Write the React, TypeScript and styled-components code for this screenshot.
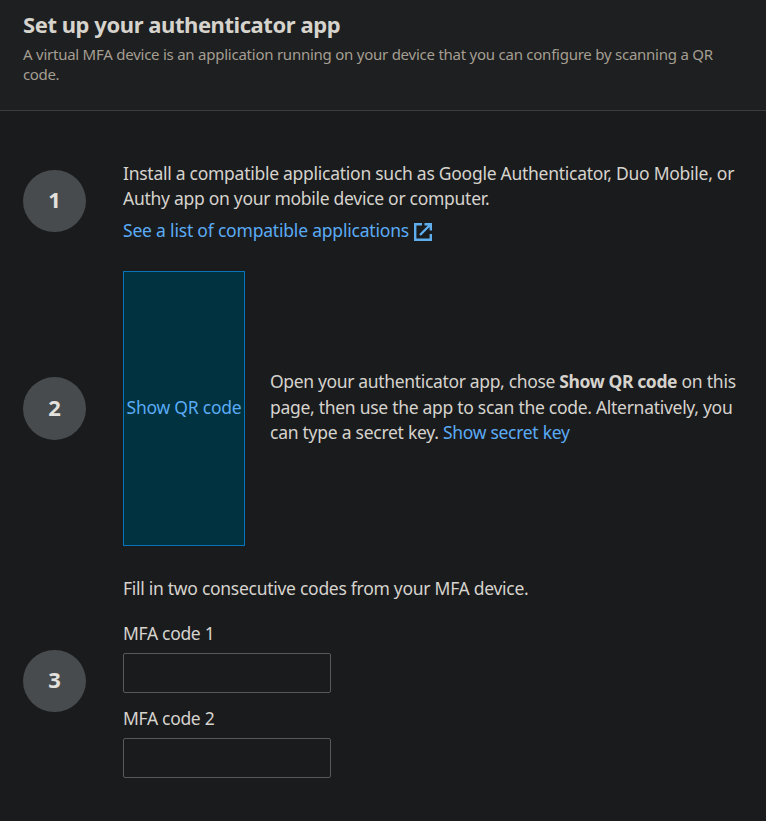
import React from "react";
import styled, { createGlobalStyle } from "styled-components";

const GlobalStyle = createGlobalStyle`
  *, *::before, *::after { box-sizing: border-box; }
  body {
    margin: 0;
    background: #1a1b1d;
    color: #d6d3cd;
    font-family: "Noto Sans", "Open Sans", sans-serif;
    font-size: 17.5px;
    line-height: 25.5px;
  }
`;

const Panel = styled.main`
  display: flex;
  flex-direction: column;
  width: 766px;
  height: 821px;
  overflow: hidden;
`;

const Header = styled.header`
  height: 111px;
  padding: 10px 23px 0;
  background: #1d1f20;
  border-bottom: 1px solid #3a3d3f;
`;

const Title = styled.h1`
  margin: 0 0 5px;
  font-size: 22px;
  line-height: 29px;
  font-weight: 700;
  white-space: nowrap;
`;

const Subtitle = styled.p`
  margin: 0;
  font-size: 15px;
  line-height: 20px;
  color: #a59e92;
`;

const Steps = styled.ol`
  list-style: none;
  margin: 0;
  padding: 50px 23px 0;
  display: flex;
  flex-direction: column;
`;

const Step = styled.li<{ $height: number; $gap?: number }>`
  display: grid;
  grid-template-columns: 63px 1fr;
  column-gap: 37px;
  align-items: center;
  height: ${(p) => p.$height}px;
  margin-bottom: ${(p) => p.$gap ?? 0}px;
`;

const Badge = styled.span<{ $height: number; $lift?: number }>`
  display: flex;
  align-items: center;
  justify-content: center;
  width: 63px;
  height: ${(p) => p.$height}px;
  margin-bottom: ${(p) => p.$lift ?? 0}px;
  border-radius: 50%;
  background: #474b4e;
  color: #e3e1dd;
  font-size: 22px;
  font-weight: 700;
  padding-bottom: 2px;
`;

const Line = styled.span`
  display: block;
  white-space: nowrap;
`;

const Run = styled.span<{ $track: number }>`
  letter-spacing: ${(p) => p.$track}px;
  white-space: pre;
`;

const Bold = styled(Run)`
  font-weight: 700;
`;

const Link = styled(Run)`
  color: #5aabf5;
  cursor: pointer;
`;

const Paragraph = styled.p`
  margin: 0;
  line-height: 25px;
`;

const ExternalRow = styled.div`
  display: flex;
  align-items: center;
  gap: 5px;
  margin-top: 7px;

  svg {
    margin-top: 2px;
  }
`;

const Scan = styled.div`
  display: flex;
  align-items: center;
  gap: 25px;
  height: 100%;
`;

const QrButton = styled.button`
  flex: none;
  width: 122px;
  height: 100%;
  padding: 0 0 2px;
  border: 1px solid #0972b8;
  background: #00323f;
  font: inherit;
  cursor: pointer;
`;

const Instructions = styled.div`
  padding-bottom: 2px;
`;

const CodeForm = styled.div`
  align-self: start;
`;

const Field = styled.label<{ $top: number }>`
  display: block;
  margin-top: ${(p) => p.$top}px;
`;

const CodeInput = styled.input`
  display: block;
  width: 208px;
  height: 40px;
  margin-top: 7px;
  padding: 0 10px;
  border: 1px solid #57595b;
  border-radius: 2px;
  background: #1a1b1d;
  color: inherit;
  font: inherit;
`;

const ExternalIcon = () => (
  <svg width="18" height="18" viewBox="0 0 18 18" fill="none" stroke="#5eaeee" strokeWidth="2.4">
    <path d="M8 1.2H1.2v15.6h15.6V11" />
    <path d="M10.5 1.2h6.3v6.3M16.5 1.5L6 12" />
  </svg>
);

export default function App() {
  return (
    <>
      <GlobalStyle />
      <Panel>
        <Header>
          <Title>
            <Run $track={-0.44}>Set up your authenticator app</Run>
          </Title>
          <Subtitle>
            <Line>
              <Run $track={-0.242}>
                A virtual MFA device is an application running on your device that you can configure by scanning a QR
              </Run>
            </Line>
            <Line>
              <Run $track={-0.35}>code.</Run>
            </Line>
          </Subtitle>
        </Header>
        <Steps>
          <Step $height={82} $gap={28}>
            <Badge $height={62} $lift={3}>1</Badge>
            <div>
              <Paragraph>
                <Line>
                  <Run $track={-0.267}>Install a compatible application such as Google Authenticator, Duo Mobile, or</Run>
                </Line>
                <Line>
                  <Run $track={-0.285}>Authy app on your mobile device or computer.</Run>
                </Line>
              </Paragraph>
              <ExternalRow>
                <Link $track={-0.2}>See a list of compatible applications</Link>
                <ExternalIcon />
              </ExternalRow>
            </div>
          </Step>
          <Step $height={275} $gap={30}>
            <Badge $height={63}>2</Badge>
            <Scan>
              <QrButton>
                <Link $track={-0.24}>Show QR code</Link>
              </QrButton>
              <Instructions>
                <Line>
                  <Run $track={-0.34}>{"Open your authenticator app, chose "}</Run>
                  <Bold $track={-0.38}>Show QR code</Bold>
                  <Run $track={-0.24}>{" on this"}</Run>
                </Line>
                <Line>
                  <Run $track={-0.287}>page, then use the app to scan the code. Alternatively, you</Run>
                </Line>
                <Line>
                  <Run $track={-0.26}>{"can type a secret key. "}</Run>
                  <Link $track={-0.3}>Show secret key</Link>
                </Line>
              </Instructions>
            </Scan>
          </Step>
          <Step $height={210}>
            <Badge $height={62}>3</Badge>
            <CodeForm>
              <Line>
                <Run $track={-0.28}>Fill in two consecutive codes from your MFA device.</Run>
              </Line>
              <Field $top={19}>
                <Run $track={-0.32}>MFA code 1</Run>
                <CodeInput />
              </Field>
              <Field $top={12.5}>
                <Run $track={-0.32}>MFA code 2</Run>
                <CodeInput />
              </Field>
            </CodeForm>
          </Step>
        </Steps>
      </Panel>
    </>
  );
}
